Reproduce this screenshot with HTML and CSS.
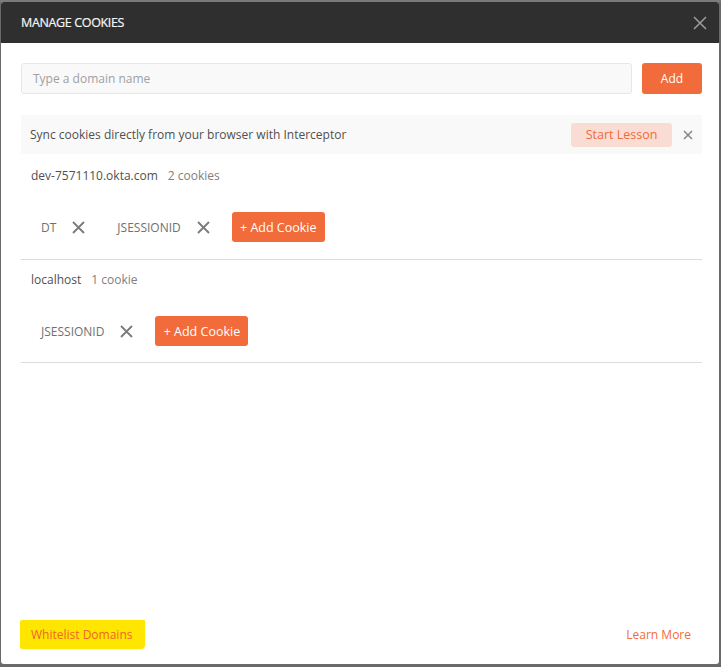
FILE: index.html
```html
<!DOCTYPE html>
<html>
<head>
<meta charset="utf-8">
<link rel="stylesheet" href="styles.css">
</head>
<body>
<div class="backdrop">
  <div class="modal">
    <div class="modal-header">
      <div class="title">MANAGE COOKIES</div>
      <svg class="close" width="14" height="14" viewBox="0 0 14 14"><path d="M1 1L13 13M13 1L1 13" stroke="#9a9a9a" stroke-width="1.6" fill="none"/></svg>
    </div>
    <div class="modal-body">
      <div class="add-row">
        <div class="domain-input">Type a domain name</div>
        <div class="btn btn-add">Add</div>
      </div>
      <div class="banner">
        <div class="banner-text">Sync cookies directly from your browser with Interceptor</div>
        <div class="btn-lesson">Start Lesson</div>
        <svg class="banner-x" width="10" height="10" viewBox="0 0 10 10"><path d="M1 1L9 9M9 1L1 9" stroke="#858585" stroke-width="1.5" fill="none"/></svg>
      </div>
      <div class="domain">
        <div class="domain-title"><span class="dname">dev-7571110.okta.com</span><span class="dcount">2 cookies</span></div>
        <div class="cookie-row">
          <div class="chip"><span>DT</span><svg width="13" height="13" viewBox="0 0 13 13"><path d="M1 1L12 12M12 1L1 12" stroke="#7a7a7a" stroke-width="1.8" fill="none"/></svg></div>
          <div class="chip"><span>JSESSIONID</span><svg width="13" height="13" viewBox="0 0 13 13"><path d="M1 1L12 12M12 1L1 12" stroke="#7a7a7a" stroke-width="1.8" fill="none"/></svg></div>
          <div class="btn btn-cookie">+ Add Cookie</div>
        </div>
      </div>
      <div class="domain second">
        <div class="domain-title"><span class="dname">localhost</span><span class="dcount">1 cookie</span></div>
        <div class="cookie-row">
          <div class="chip"><span>JSESSIONID</span><svg width="13" height="13" viewBox="0 0 13 13"><path d="M1 1L12 12M12 1L1 12" stroke="#7a7a7a" stroke-width="1.8" fill="none"/></svg></div>
          <div class="btn btn-cookie">+ Add Cookie</div>
        </div>
      </div>
    </div>
    <div class="modal-footer">
      <span class="link highlight">Whitelist Domains</span>
      <span class="link">Learn More</span>
    </div>
  </div>
</div>
</body>
</html>
```
FILE: styles.css
```css
html, body {
  margin: 0;
  padding: 0;
}
body {
  background: #6a6a6a;
  font-family: "Open Sans", "Noto Sans", sans-serif;
  font-size: 12px;
  color: #505050;
}
.backdrop {
  width: 721px;
  height: 667px;
  padding: 2px 2px 0 1px;
  box-sizing: border-box;
  background: linear-gradient(#7a7a7a 0, #7a7a7a 2px, #6a6a6a 2px);
}
.modal {
  width: 718px;
  height: 662px;
  background: #fff;
  border-radius: 3px;
  display: flex;
  flex-direction: column;
  overflow: hidden;
}
.modal-header {
  height: 41px;
  background: #2f2f2f;
  display: flex;
  align-items: center;
  justify-content: space-between;
  padding: 0 12px 0 20px;
  flex-shrink: 0;
}
.title {
  color: #f5f5f5;
  font-size: 12.5px;
  letter-spacing: -0.35px;
  font-weight: 500;
  -webkit-text-stroke: 0.2px #f5f5f5;
}
.close {
  margin-top: 1px;
}
.modal-body {
  flex: 1;
  padding: 20px 17px 0 20px;
}
.add-row {
  display: flex;
  gap: 10px;
  height: 31px;
}
.domain-input {
  flex: 1;
  background: #f9f9f9;
  border: 1px solid #e6e6e6;
  border-radius: 3px;
  box-sizing: border-box;
  display: flex;
  align-items: center;
  padding-left: 11px;
  color: #a0a0a0;
}
.btn {
  background: #f26b3a;
  color: #fff;
  border-radius: 3px;
  display: flex;
  align-items: center;
  justify-content: center;
}
.btn-add {
  width: 60px;
}
.banner {
  margin-top: 21px;
  height: 39px;
  background: #f9f9f9;
  display: flex;
  align-items: center;
  padding: 0 9px;
}
.banner-text {
  flex: 1;
}
.btn-lesson {
  width: 101px;
  height: 24px;
  border-radius: 3px;
  background: #f9ddd4;
  color: #f26b3a;
  display: flex;
  align-items: center;
  justify-content: center;
  font-size: 12.5px;
}
.banner-x {
  margin-left: 11px;
  margin-right: 0;
}
.domain {
  padding: 13px 0 17px 10px;
  border-bottom: 1px solid #dcdcdc;
}
.domain.second {
  padding-top: 11px;
  padding-bottom: 16px;
}
.domain-title {
  line-height: 18px;
}
.dname {
  margin-right: 10px;
}
.dcount {
  color: #808080;
}
.cookie-row {
  margin-top: 27px;
  height: 30px;
  display: flex;
  align-items: center;
}
.chip {
  display: flex;
  align-items: center;
  padding-left: 10px;
  margin-right: 22px;
  color: #707070;
}
.chip span {
  margin-right: 16px;
}
.btn-cookie {
  width: 93px;
  height: 30px;
  font-size: 12.5px;
}
.modal-footer {
  height: 60px;
  display: flex;
  align-items: center;
  justify-content: space-between;
  padding: 0 28px 0 30px;
  flex-shrink: 0;
}
.link {
  color: #f26b3a;
  font-size: 12px;
}
.highlight {
  background: #ffe600;
  padding: 6px 13px 6px 11px;
  margin-left: -11px;
  border-radius: 2px 1px 4px 2px;
  color: #f0642e;
}
```
